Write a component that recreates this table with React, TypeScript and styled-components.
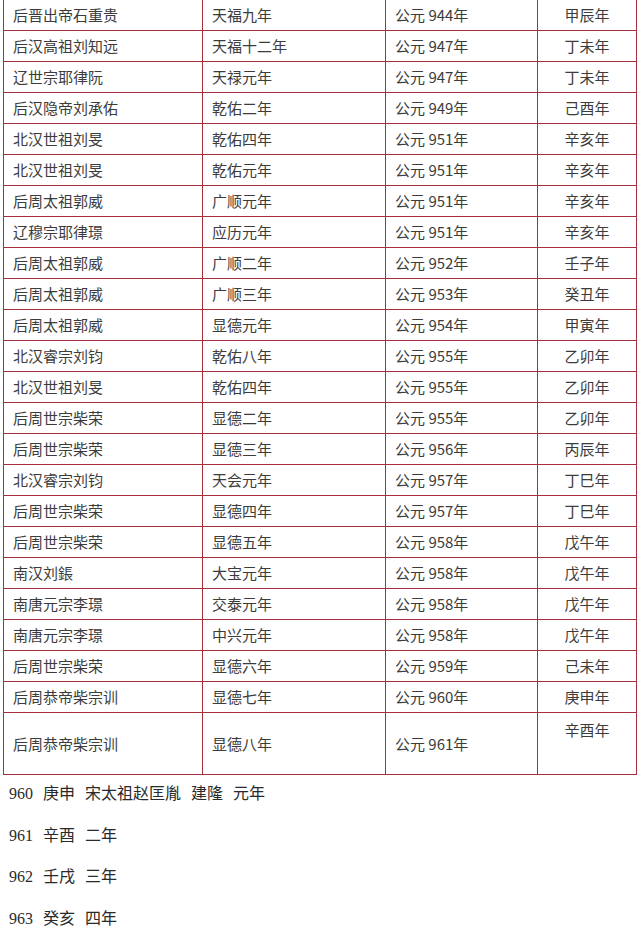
import React from 'react'
import styled, { createGlobalStyle } from 'styled-components'

const GlobalStyle = createGlobalStyle`
    html, body {
        margin: 0;
        padding: 0;
        background: #fff;
    }
    body {
        width: 640px;
        overflow: hidden;
    }
`

const Page = styled.div`
    width: 640px;
    background: #fff;
`

const Table = styled.table`
    border-collapse: collapse;
    table-layout: fixed;
    width: 633px;
    margin: -1px 0 0 3px;
    font-family: "Noto Sans CJK SC", "Noto Sans", sans-serif;
    font-size: 15px;
    color: #3c3c3c;
`

const Cell = styled.td<{ $center?: boolean; $top?: boolean; $tall?: boolean }>`
    border: 1px solid #a8303c;
    height: ${(p) => (p.$tall ? (p.$top ? 55 : 61) : 30)}px;
    padding: ${(p) => (p.$top ? '6px 9px 0' : '0 9px')};
    text-align: ${(p) => (p.$center ? 'center' : 'left')};
    vertical-align: ${(p) => (p.$top ? 'top' : 'middle')};
    line-height: 22px;
    white-space: nowrap;
`

const Notes = styled.div`
    padding: 7px 0 0 9px;
    font-family: "Liberation Serif", "Noto Sans CJK SC", serif;
    font-size: 16px;
    color: #2a2a2a;
`

const NoteLine = styled.p`
    display: flex;
    gap: 10px;
    margin: 0 0 17.5px;
    line-height: 24px;
`

const rows = [
    ['后晋出帝石重贵', '天福九年', '944', '甲辰年'],
    ['后汉高祖刘知远', '天福十二年', '947', '丁未年'],
    ['辽世宗耶律阮', '天禄元年', '947', '丁未年'],
    ['后汉隐帝刘承佑', '乾佑二年', '949', '己酉年'],
    ['北汉世祖刘旻', '乾佑四年', '951', '辛亥年'],
    ['北汉世祖刘旻', '乾佑元年', '951', '辛亥年'],
    ['后周太祖郭威', '广顺元年', '951', '辛亥年'],
    ['辽穆宗耶律璟', '应历元年', '951', '辛亥年'],
    ['后周太祖郭威', '广顺二年', '952', '壬子年'],
    ['后周太祖郭威', '广顺三年', '953', '癸丑年'],
    ['后周太祖郭威', '显德元年', '954', '甲寅年'],
    ['北汉睿宗刘钧', '乾佑八年', '955', '乙卯年'],
    ['北汉世祖刘旻', '乾佑四年', '955', '乙卯年'],
    ['后周世宗柴荣', '显德二年', '955', '乙卯年'],
    ['后周世宗柴荣', '显德三年', '956', '丙辰年'],
    ['北汉睿宗刘钧', '天会元年', '957', '丁巳年'],
    ['后周世宗柴荣', '显德四年', '957', '丁巳年'],
    ['后周世宗柴荣', '显德五年', '958', '戊午年'],
    ['南汉刘鋹', '大宝元年', '958', '戊午年'],
    ['南唐元宗李璟', '交泰元年', '958', '戊午年'],
    ['南唐元宗李璟', '中兴元年', '958', '戊午年'],
    ['后周世宗柴荣', '显德六年', '959', '己未年'],
    ['后周恭帝柴宗训', '显德七年', '960', '庚申年'],
]

const notes = [
    ['960', '庚申', '宋太祖赵匡胤', '建隆', '元年'],
    ['961', '辛酉', '二年'],
    ['962', '壬戌', '三年'],
    ['963', '癸亥', '四年'],
]

const App = () => {
    return (
        <>
            <GlobalStyle />
            <Page>
                <Table>
                    <colgroup>
                        <col style={{ width: 199 }} />
                        <col style={{ width: 183 }} />
                        <col style={{ width: 152 }} />
                        <col style={{ width: 99 }} />
                    </colgroup>
                    <tbody>
                        {rows.map((r, i) => (
                            <tr key={i}>
                                <Cell>{r[0]}</Cell>
                                <Cell>{r[1]}</Cell>
                                <Cell>公元 {r[2]}年</Cell>
                                <Cell $center>{r[3]}</Cell>
                            </tr>
                        ))}
                        <tr>
                            <Cell $tall>后周恭帝柴宗训</Cell>
                            <Cell $tall>显德八年</Cell>
                            <Cell $tall>公元 961年</Cell>
                            <Cell $tall $top $center>辛酉年</Cell>
                        </tr>
                    </tbody>
                </Table>
                <Notes>
                    {notes.map((n, i) => (
                        <NoteLine key={i}>
                            {n.map((w, j) => (
                                <span key={j}>{w}</span>
                            ))}
                        </NoteLine>
                    ))}
                </Notes>
            </Page>
        </>
    )
}

export default App
